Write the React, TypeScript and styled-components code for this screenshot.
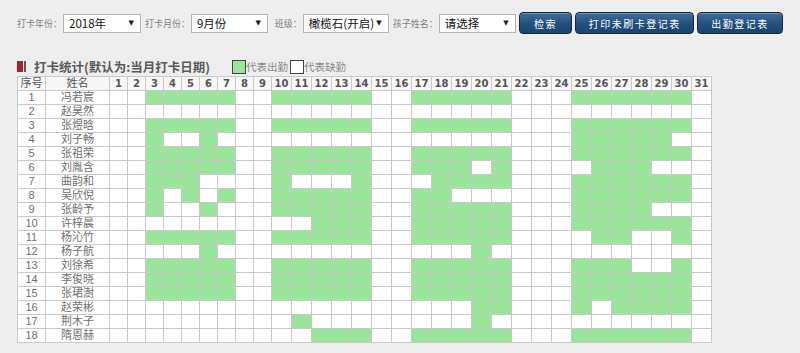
import React from "react";
import styled, { createGlobalStyle } from "styled-components";

const Global = createGlobalStyle`
  html, body { margin: 0; padding: 0; background: #eeeeee; }
  body { font-family: "Noto Sans CJK SC", "Noto Sans", sans-serif; }
`;

const Page = styled.div`
  padding: 12px 17px 0 17px;
  display: flex;
  flex-direction: column;
`;

const Toolbar = styled.div`
  display: flex;
  align-items: center;
  height: 22px;
`;

const Label = styled.span<{ $gap?: number }>`
  font-size: 9px;
  color: #808080;
  margin: 0 1px 0 ${(p) => p.$gap ?? 0}px;
  white-space: nowrap;
`;

const SelectBox = styled.div<{ $w: number }>`
  width: ${(p) => p.$w}px;
  height: 19px;
  box-sizing: border-box;
  background: #fff;
  border: 1px solid #b5b5b5;
  display: flex;
  align-items: center;
  justify-content: space-between;
  padding: 0 6px 0 5px;
  font-size: 11.5px;
  color: #111;
  white-space: nowrap;
`;

const Arrow = styled.span`
  font-size: 7px;
  color: #222;
  font-family: "DejaVu Sans", sans-serif;
`;

const Button = styled.button<{ $w: number }>`
  width: ${(p) => p.$w}px;
  height: 22px;
  margin-left: 3px;
  box-sizing: border-box;
  border: 1px solid #14263a;
  border-radius: 4px;
  background: linear-gradient(#3f6f9e, #234f7c 55%, #1a4570);
  box-shadow: inset 0 1px 0 rgba(255, 255, 255, 0.25);
  color: #fff;
  font-family: "Noto Sans CJK SC", sans-serif;
  font-size: 10px;
  letter-spacing: 1.5px;
  padding: 0;
`;

const TitleRow = styled.div`
  display: flex;
  align-items: center;
  margin-top: 24px;
  height: 17px;
`;

const Marker = styled.span`
  width: 6px;
  height: 11px;
  background: #a8242a;
  margin-right: 1px;
`;

const MarkerBar = styled.span`
  width: 2px;
  height: 11px;
  background: #5a5a5a;
  margin-right: 8px;
`;

const Title = styled.span`
  font-size: 12.5px;
  font-weight: bold;
  color: #5a5a5a;
  margin-right: 22px;
`;

const LegendBox = styled.span<{ $on: boolean }>`
  width: 12px;
  height: 12px;
  border: 1px solid #444;
  background: ${(p) => (p.$on ? "#99e69a" : "#fff")};
`;

const LegendText = styled.span`
  font-size: 10.5px;
  color: #8a8a8a;
  margin-right: 2px;
`;

const Table = styled.table`
  border-collapse: collapse;
  table-layout: fixed;
  width: 694px;
  background: #fff;
  margin-top: 1px;
`;

const HeadCell = styled.th<{ $num?: boolean }>`
  height: 13px;
  padding: 0;
  border: 1px solid #c9c9c9;
  background: #f7f7f7;
  font-size: ${(p) => (p.$num ? "10px" : "11px")};
  font-weight: ${(p) => (p.$num ? "bold" : "normal")};
  font-family: ${(p) =>
    p.$num
      ? '"DejaVu Sans", sans-serif'
      : '"Liberation Sans", "Noto Sans CJK SC", sans-serif'};
  color: #555;
  line-height: 13px;
  text-align: center;
`;

const Cell = styled.td<{ $on?: boolean }>`
  height: 13px;
  padding: 0;
  border: 1px solid #c9c9c9;
  background: ${(p) => (p.$on ? "#99e69a" : "#fff")};
  font-family: "Liberation Sans", "Noto Sans CJK SC", sans-serif;
  font-size: 11px;
  color: #707070;
  line-height: 13px;
  text-align: center;
  white-space: nowrap;
  overflow: hidden;
`;

const range = (a: number, b: number) =>
  Array.from({ length: b - a + 1 }, (_, i) => a + i);
const A = range(3, 7);
const B = range(10, 14);
const C = range(17, 21);
const D = range(25, 30);

const rows: { name: string; days: number[] }[] = [
  { name: "冯若宸", days: [...A, ...B, ...C, ...D] },
  { name: "赵昊然", days: [] },
  { name: "张煜晗", days: [...A, ...B, ...C, ...D] },
  { name: "刘子畅", days: [3, 6, ...range(25, 29)] },
  { name: "张祖荣", days: [...A, ...B, ...C, ...D] },
  { name: "刘胤含", days: [...A, ...B, 17, 18, 19, 21, 26, 27, 28] },
  { name: "曲韵和", days: [3, 4, 5, 10, 14, ...range(18, 21), ...D] },
  { name: "吴欣倪", days: [3, 5, 7, ...B, 17, 18, ...D] },
  { name: "张龄予", days: [3, 6, ...B, ...C, ...range(25, 28)] },
  { name: "许梓晨", days: [12, 13, 14, ...C, ...D] },
  { name: "杨沁竹", days: [...A, ...B, ...C, 26, 27, 30] },
  { name: "杨子航", days: [6, 20] },
  { name: "刘徐希", days: [...A, ...B, ...C, 25, 26, 27, 30] },
  { name: "李俊晓", days: [...A, ...B, ...C, ...D] },
  { name: "张珺澍", days: [...A, ...B, ...C, ...D] },
  { name: "赵荣彬", days: [20, 21, 25, 27, 28, 29, 30] },
  { name: "荆木子", days: [11, 20] },
  { name: "隋恩赫", days: [12, 13, 14, ...C, ...D] },
];

const days = range(1, 31);

export default function App() {
  return (
    <>
      <Global />
      <Page>
        <Toolbar>
          <Label>打卡年份：</Label>
          <SelectBox $w={78}>
            <span>2018年</span>
            <Arrow>▼</Arrow>
          </SelectBox>
          <Label $gap={4}>打卡月份：</Label>
          <SelectBox $w={77}>
            <span>9月份</span>
            <Arrow>▼</Arrow>
          </SelectBox>
          <Label $gap={7}>班级：</Label>
          <SelectBox $w={86}>
            <span>橄榄石(开启)</span>
            <Arrow>▼</Arrow>
          </SelectBox>
          <Label $gap={4}>孩子姓名：</Label>
          <SelectBox $w={77}>
            <span>请选择</span>
            <Arrow>▼</Arrow>
          </SelectBox>
          <Button $w={54}>检索</Button>
          <Button $w={119}>打印未刷卡登记表</Button>
          <Button $w={86}>出勤登记表</Button>
        </Toolbar>
        <TitleRow>
          <Marker />
          <MarkerBar />
          <Title>打卡统计(默认为:当月打卡日期)</Title>
          <LegendBox $on />
          <LegendText>代表出勤</LegendText>
          <LegendBox $on={false} />
          <LegendText>代表缺勤</LegendText>
        </TitleRow>
        <Table>
          <colgroup>
            <col style={{ width: 28 }} />
            <col style={{ width: 64 }} />
            {days.map((d) => (
              <col key={d} style={{ width: d < 10 ? 18 : 20 }} />
            ))}
          </colgroup>
          <thead>
            <tr>
              <HeadCell>序号</HeadCell>
              <HeadCell>姓名</HeadCell>
              {days.map((d) => (
                <HeadCell key={d} $num>
                  {d}
                </HeadCell>
              ))}
            </tr>
          </thead>
          <tbody>
            {rows.map((r, i) => (
              <tr key={r.name}>
                <Cell>{i + 1}</Cell>
                <Cell>{r.name}</Cell>
                {days.map((d) => (
                  <Cell key={d} $on={r.days.includes(d)} />
                ))}
              </tr>
            ))}
          </tbody>
        </Table>
      </Page>
    </>
  );
}
